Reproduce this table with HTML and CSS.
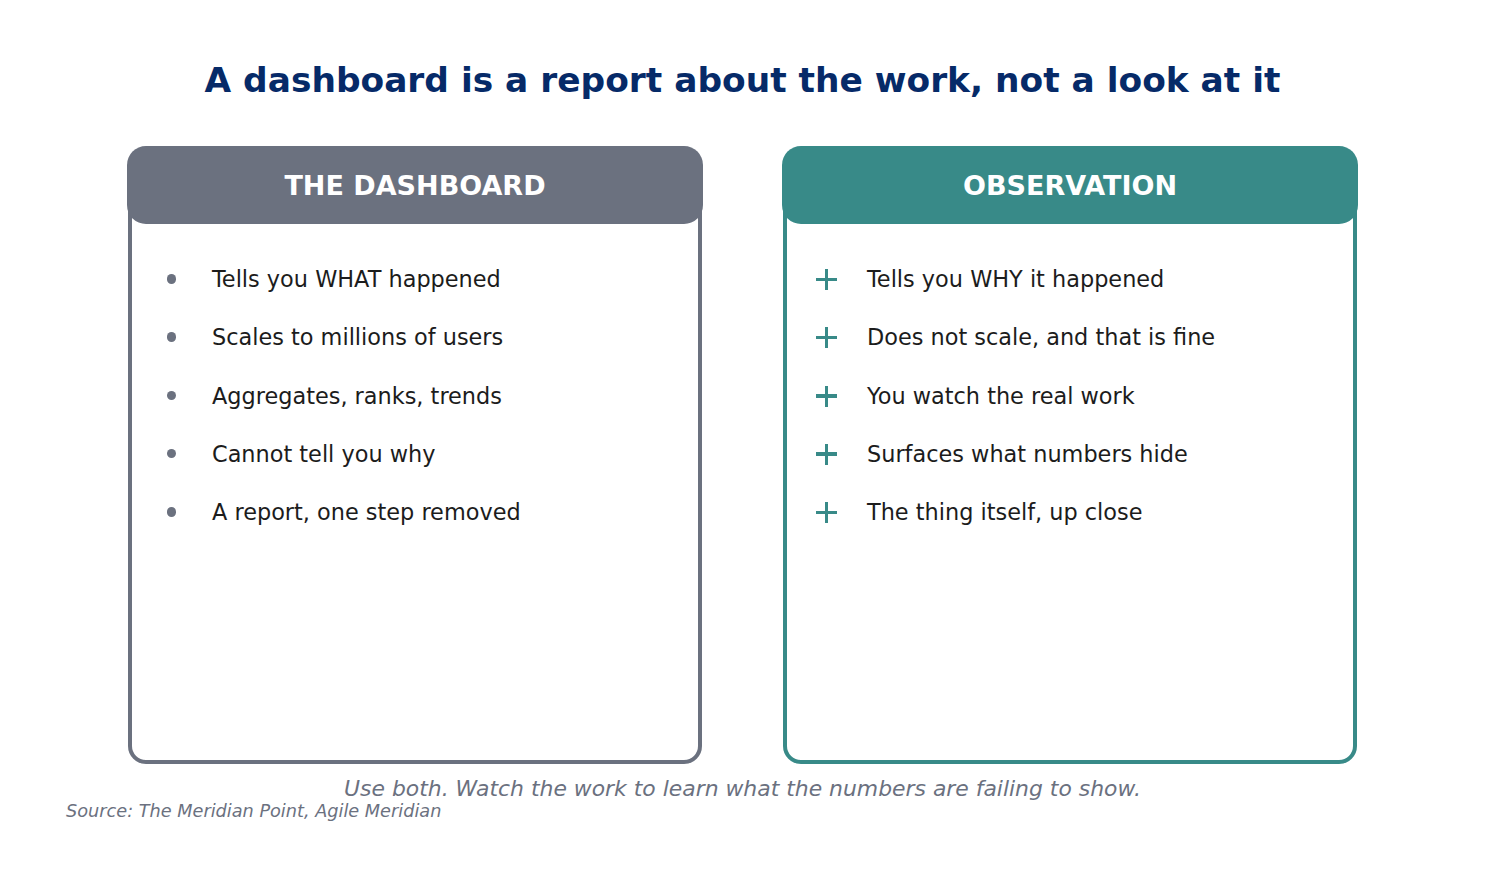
FILE: index.html
```html
<!DOCTYPE html>
<html lang="en">
<head>
<meta charset="utf-8">
<title>Dashboard vs Observation</title>
<link rel="stylesheet" href="styles.css">
</head>
<body>
<div class="page">
  <h1 class="title">A dashboard is a report about the work, not a look at it</h1>
  <div class="cards">
    <section class="card card-gray">
      <header class="card-head">THE DASHBOARD</header>
      <ul class="items">
        <li class="item"><span class="mark dot"></span><span class="label">Tells you WHAT happened</span></li>
        <li class="item"><span class="mark dot"></span><span class="label">Scales to millions of users</span></li>
        <li class="item"><span class="mark dot"></span><span class="label">Aggregates, ranks, trends</span></li>
        <li class="item"><span class="mark dot"></span><span class="label">Cannot tell you why</span></li>
        <li class="item"><span class="mark dot"></span><span class="label">A report, one step removed</span></li>
      </ul>
    </section>
    <section class="card card-teal">
      <header class="card-head">OBSERVATION</header>
      <ul class="items">
        <li class="item"><span class="mark plus"></span><span class="label">Tells you WHY it happened</span></li>
        <li class="item"><span class="mark plus"></span><span class="label">Does not scale, and that is fine</span></li>
        <li class="item"><span class="mark plus"></span><span class="label">You watch the real work</span></li>
        <li class="item"><span class="mark plus"></span><span class="label">Surfaces what numbers hide</span></li>
        <li class="item"><span class="mark plus"></span><span class="label">The thing itself, up close</span></li>
      </ul>
    </section>
  </div>
  <p class="caption">Use both. Watch the work to learn what the numbers are failing to show.</p>
  <p class="source">Source: The Meridian Point, Agile Meridian</p>
</div>
</body>
</html>
```
FILE: styles.css
```css
* { box-sizing: border-box; }
html, body { margin: 0; padding: 0; background: #ffffff; }
body { font-family: "DejaVu Sans", "Liberation Sans", sans-serif; color: #1c1c1c; }
.page { width: 1485px; height: 869px; overflow: hidden; }

.title {
  margin: 60px 0 0;
  font-size: 34.4px;
  line-height: 40px;
  font-weight: bold;
  text-align: center;
  color: #062a68;
}

.cards {
  display: flex;
  justify-content: center;
  gap: 81px;
  margin-top: 47px;
}

.card {
  width: 574px;
  height: 617px;
  border: 4px solid;
  border-radius: 18px;
  background: #ffffff;
}
.card-gray { border-color: #6b717f; }
.card-teal { border-color: #388a88; }

.card-head {
  height: 78px;
  margin: -5px -5px 0;
  border-radius: 19px;
  display: flex;
  align-items: center;
  justify-content: center;
  color: #ffffff;
  font-size: 27px;
  font-weight: bold;
}
.card-gray .card-head { background: #6b717f; }
.card-teal .card-head { background: #388a88; }

.items {
  list-style: none;
  margin: 0;
  padding: 26px 0 0;
}
.item {
  height: 58.25px;
  display: flex;
  align-items: center;
  font-size: 22.4px;
}
.mark {
  flex: none;
  width: 80px;
  height: 24px;
  position: relative;
}
.label { color: #1c1c1c; }

.dot::before {
  content: "";
  position: absolute;
  left: 34.5px;
  top: 7px;
  width: 9.5px;
  height: 9.5px;
  border-radius: 50%;
  background: #6b717f;
}
.plus::before, .plus::after {
  content: "";
  position: absolute;
  background: #388a88;
}
.plus::before { left: 29px; top: 10.5px; width: 21px; height: 3.6px; }
.plus::after { left: 37.7px; top: 2px; width: 3.6px; height: 21px; }

.caption {
  margin: 13px 0 0;
  font-size: 21.9px;
  line-height: 24px;
  font-style: italic;
  text-align: center;
  color: #6b717f;
}
.source {
  margin: 0;
  padding-left: 66px;
  font-size: 17.7px;
  line-height: 21px;
  font-style: italic;
  color: #6b717f;
}
```
